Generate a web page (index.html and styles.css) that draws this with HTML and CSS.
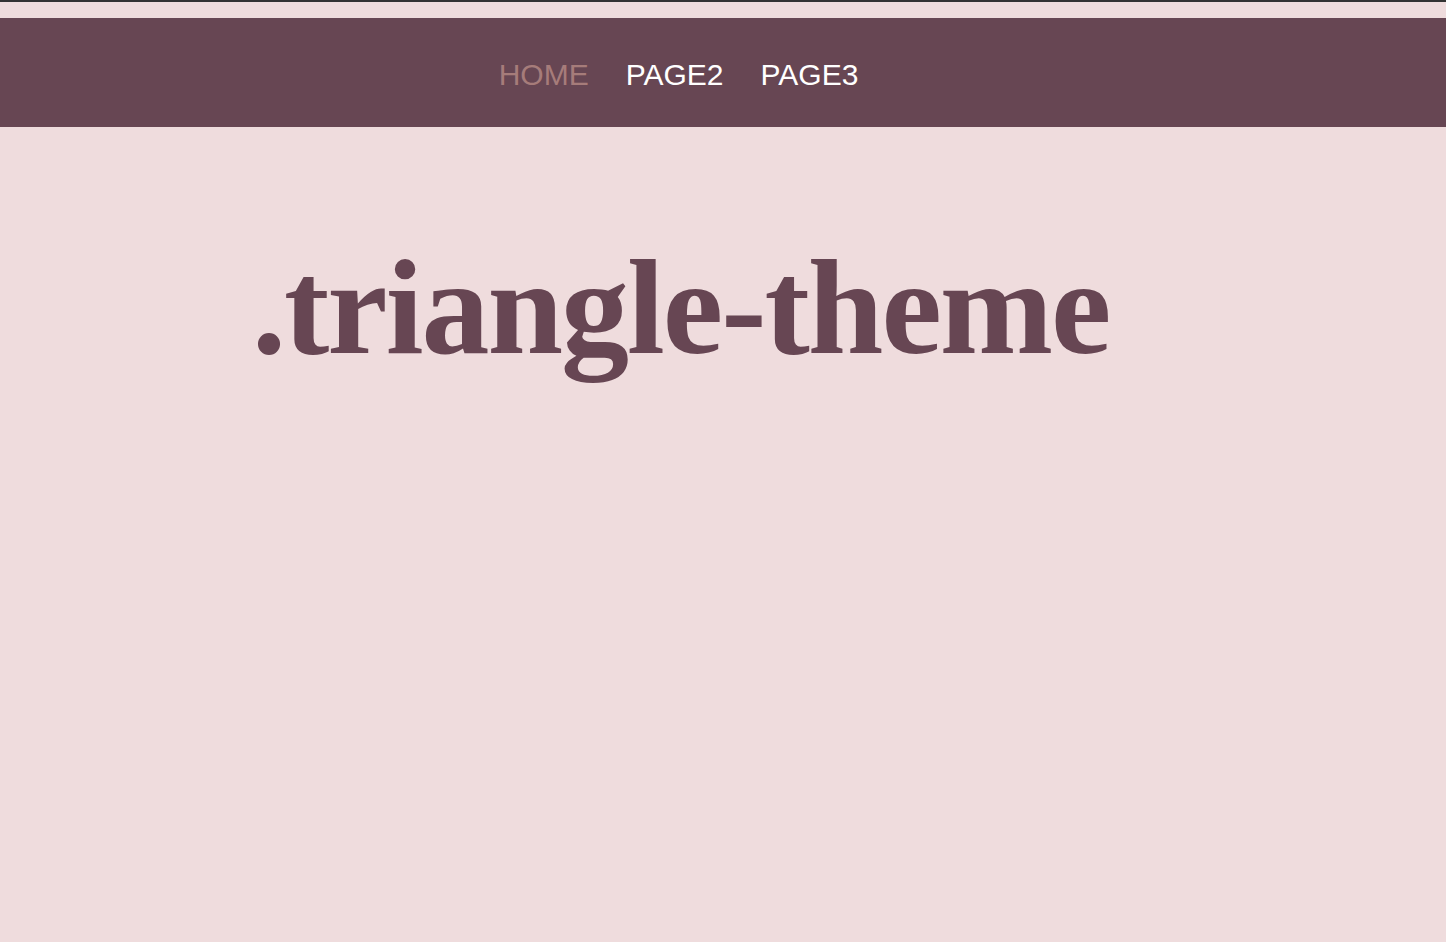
FILE: index.html
```html
<!DOCTYPE html>
<html>
<head>
<meta charset="utf-8">
<link rel="stylesheet" href="styles.css">
</head>
<body>
<div class="topline"></div>
<div class="spacer"></div>
<nav class="nav">
  <a class="nav-link active">HOME</a>
  <a class="nav-link">PAGE2</a>
  <a class="nav-link">PAGE3</a>
</nav>
<main class="main">
  <h1 class="title">.triangle-theme</h1>
</main>
</body>
</html>
```
FILE: styles.css
```css
html, body {
  margin: 0;
  padding: 0;
  background: #efdcdd;
  height: 100%;
}
.topline {
  height: 2px;
  background: #333333;
}
.spacer {
  height: 16px;
}
.nav {
  height: 109px;
  background: #674653;
  display: flex;
  align-items: center;
  justify-content: center;
  gap: 37px;
  padding-right: 89px;
  padding-top: 5px;
  box-sizing: border-box;
}
.nav-link {
  font-family: "Liberation Sans", Arial, sans-serif;
  font-size: 30px;
  color: #ffffff;
  text-decoration: none;
}
.nav-link.active {
  color: #a67c7a;
}
.main {
  padding-left: 252px;
}
.title {
  margin: 0;
  padding-top: 112px;
  font-family: "Liberation Serif", serif;
  font-weight: bold;
  font-size: 136px;
  line-height: 1;
  color: #674653;
  letter-spacing: -2px;
}
```
